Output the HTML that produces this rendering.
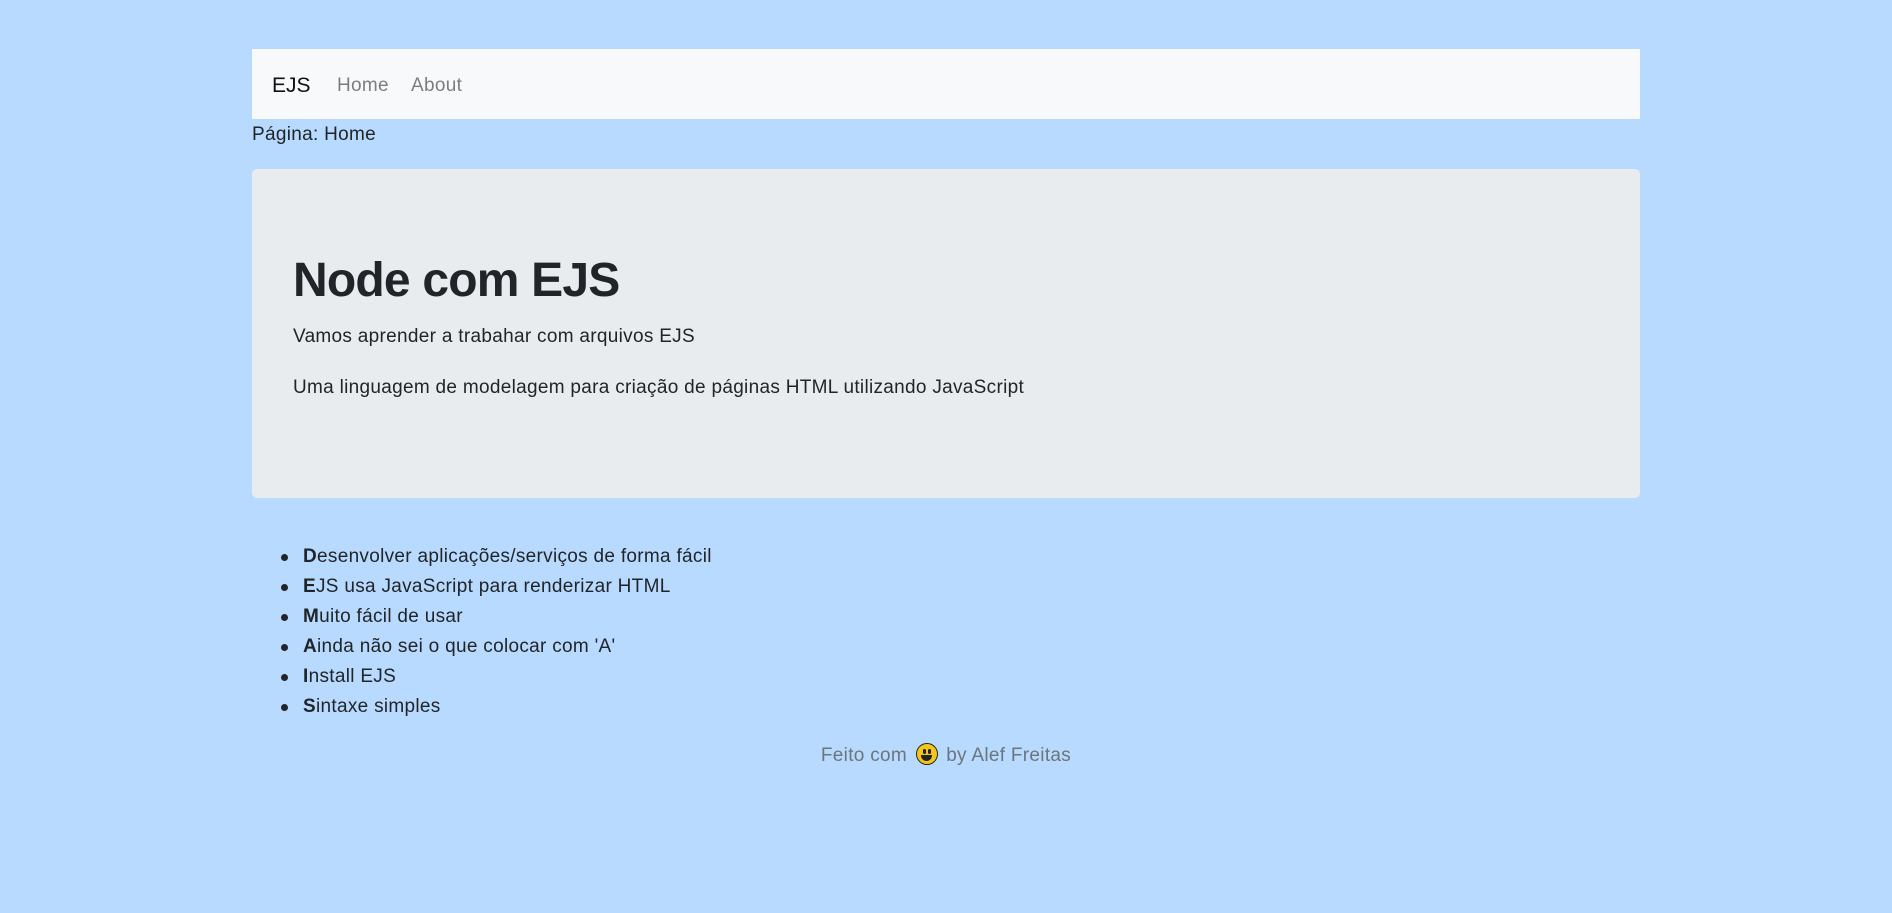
<!DOCTYPE html>
<html><head><meta charset="utf-8"><style>
*{box-sizing:border-box;margin:0;padding:0}
html,body{width:1892px;height:913px;overflow:hidden}
body{background:#b8daff;font-family:"Liberation Sans",sans-serif;font-size:19px;letter-spacing:0.3px;color:#212529;position:relative}
.abs{position:absolute}
.nav{left:252px;top:49px;width:1388px;height:70px;background:#f8f9fa}
.brand{left:272px;top:72px;font-size:21px;line-height:28px;color:#111;letter-spacing:0}
.link{top:73px;font-size:19px;line-height:26px;color:rgba(0,0,0,.5)}
.pg{left:252px;top:121px;line-height:28px}
.jumbo{left:252px;top:169px;width:1388px;height:329px;background:#e9ecef;border-radius:5px}
h1{position:absolute;left:293px;top:252px;font-size:48px;line-height:58px;font-weight:bold;letter-spacing:-0.8px}
.p{left:293px;line-height:28px}
ul{position:absolute;left:303px;top:542px;line-height:30px;list-style:none}
li{position:relative}
li:before{content:"";position:absolute;left:-22px;top:12px;width:7px;height:7px;border-radius:50%;background:#212529}
li b{font-weight:bold}
.foot{left:0;width:1892px;top:742px;text-align:center;color:#6c757d;line-height:28px}
.emo{display:inline-block;width:22px;height:22px;border-radius:50%;background:#f5c518;border:1.5px solid #222;vertical-align:-4px;position:relative;margin:0 3px}
.emo:before,.emo:after{content:"";position:absolute;top:5px;width:3px;height:5px;background:#222;border-radius:2px}
.emo:before{left:6px}.emo:after{right:6px}
.emo i{position:absolute;left:4px;top:11px;width:11px;height:6px;background:#222;border-radius:0 0 6px 6px}
</style></head><body>
<div class="abs nav"></div>
<div class="abs brand">EJS</div>
<div class="abs link" style="left:337px">Home</div>
<div class="abs link" style="left:411px">About</div>
<div class="abs pg">Página: Home</div>
<div class="abs jumbo"></div>
<h1>Node com EJS</h1>
<div class="abs p" style="top:323px">Vamos aprender a trabahar com arquivos EJS</div>
<div class="abs p" style="top:374px">Uma linguagem de modelagem para criação de páginas HTML utilizando JavaScript</div>
<ul>
<li><b>D</b>esenvolver aplicações/serviços de forma fácil</li>
<li><b>E</b>JS usa JavaScript para renderizar HTML</li>
<li><b>M</b>uito fácil de usar</li>
<li><b>A</b>inda não sei o que colocar com 'A'</li>
<li><b>I</b>nstall EJS</li>
<li><b>S</b>intaxe simples</li>
</ul>
<div class="abs foot">Feito com <span class="emo"><i></i></span> by Alef Freitas</div>
</body></html>
